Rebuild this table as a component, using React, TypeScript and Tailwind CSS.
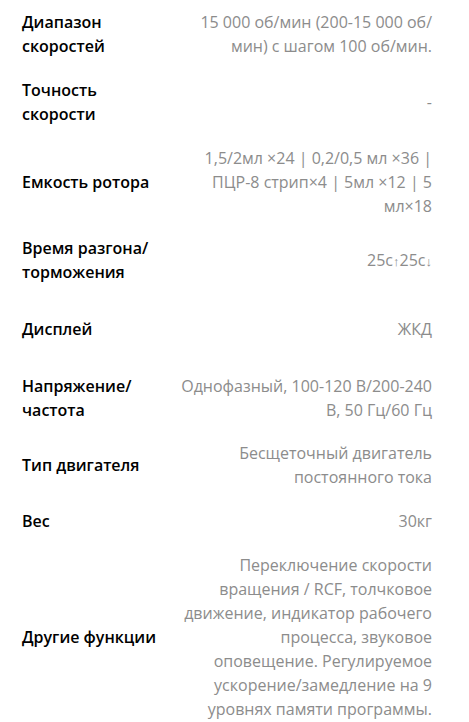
const specs: { label: string; value: React.ReactNode; pad: string }[] = [
  {
    label: "Диапазон скоростей",
    value: "15 000 об/мин (200-15 000 об/мин) с шагом 100 об/мин.",
    pad: "py-[10px]",
  },
  { label: "Точность скорости", value: "-", pad: "py-[10px]" },
  {
    label: "Емкость ротора",
    value: "1,5/2мл ×24 | 0,2/0,5 мл ×36 | ПЦР-8 стрип×4 | 5мл ×12 | 5 мл×18",
    pad: "pt-[10px] pb-[8px]",
  },
  {
    label: "Время разгона/ торможения",
    value: (
      <>
        25с<span className="text-[13px]">↑</span>25с<span className="text-[13px]">↓</span>
      </>
    ),
    pad: "py-[10px]",
  },
  { label: "Дисплей", value: "ЖКД", pad: "py-[23px]" },
  {
    label: "Напряжение/ частота",
    value: "Однофазный, 100-120 В/200-240 В, 50 Гц/60 Гц",
    pad: "pt-[10px] pb-[9px]",
  },
  { label: "Тип двигателя", value: "Бесщеточный двигатель постоянного тока", pad: "py-[10px]" },
  { label: "Вес", value: "30кг", pad: "py-[10px]" },
  {
    label: "Другие функции",
    value: (
      <>
        Переключение скорости вращения / RCF, толчковое движение, индикатор рабочего процесса, звуковое
        <br />
        оповещение. Регулируемое ускорение/замедление на 9 уровнях памяти программы.
      </>
    ),
    pad: "py-[10px]",
  },
]

export default function App() {
  return (
    <div className="min-h-screen bg-white pl-[22px] pr-[37px] font-['Open_Sans',sans-serif] text-[16px] leading-6">
      {specs.map((row) => (
        <div key={row.label} className={`grid grid-cols-[150px_1fr] items-center ${row.pad}`}>
          <div className="font-semibold text-black">{row.label}</div>
          <div className="text-right text-[#8c8c8c]">{row.value}</div>
        </div>
      ))}
    </div>
  )
}
